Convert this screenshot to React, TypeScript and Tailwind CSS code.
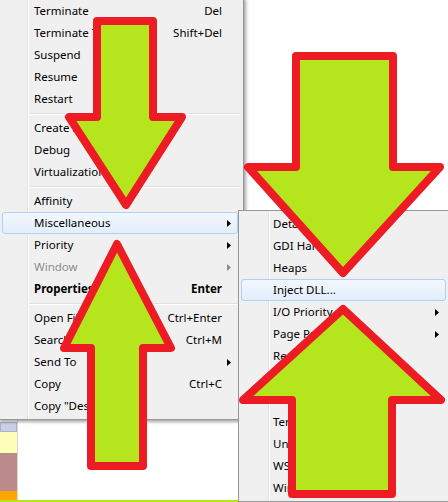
type Item =
  | { sep: true }
  | { sep?: false; label: string; key?: string; sub?: boolean; bold?: boolean; dim?: boolean; hot?: boolean };

const mainItems: Item[] = [
  { label: "Terminate", key: "Del" },
  { label: "Terminate Tree", key: "Shift+Del" },
  { label: "Suspend" },
  { label: "Resume" },
  { label: "Restart" },
  { sep: true },
  { label: "Create Dump File..." },
  { label: "Debug" },
  { label: "Virtualization" },
  { sep: true },
  { label: "Affinity" },
  { label: "Miscellaneous", sub: true, hot: true },
  { label: "Priority", sub: true },
  { label: "Window", sub: true, dim: true },
  { label: "Properties", key: "Enter", bold: true },
  { sep: true },
  { label: "Open File Location", key: "Ctrl+Enter" },
  { label: "Search Online", key: "Ctrl+M" },
  { label: "Send To", sub: true },
  { label: "Copy", key: "Ctrl+C" },
  { label: 'Copy "Description"' },
];

const subItems: Item[] = [
  { label: "Details" },
  { label: "GDI Handles" },
  { label: "Heaps" },
  { label: "Inject DLL...", hot: true },
  { label: "I/O Priority", sub: true },
  { label: "Page Priority", sub: true },
  { label: "Reduce Working Set" },
  { label: "Run As..." },
  { label: "Run As This User..." },
  { label: "Terminator" },
  { label: "Unloaded Modules" },
  { label: "WS Watch" },
  { label: "Windows" },
];

function SubArrow({ dim }: { dim?: boolean }) {
  return (
    <svg width="4" height="7" viewBox="0 0 4 7" className="absolute right-[6px] top-[7px]">
      <path d="M0 0 L4 3.5 L0 7 Z" fill={dim ? "#8d8d8d" : "#000"} />
    </svg>
  );
}

function Menu({ items, rowClass }: { items: Item[]; rowClass: string }) {
  return (
    <>
      {items.map((it, i) =>
        it.sep ? (
          <div key={i} className="h-[7px] flex flex-col justify-center ml-[31px] mr-[3px]">
            <div className="h-px bg-[#e0e0e0]" />
            <div className="h-px bg-white" />
          </div>
        ) : (
          <div
            key={i}
            className={`relative flex items-center h-[22px] rounded-[3px] border ${rowClass} ${
              it.hot
                ? "border-[#aecff7] bg-gradient-to-b from-[#f2f7fd] to-[#e2eefb]"
                : "border-transparent"
            }`}
          >
            <span
              className={`flex-1 whitespace-nowrap ${it.bold ? "font-bold" : ""} ${
                it.dim ? "text-[#8d8d8d]" : "text-black"
              }`}
            >
              {it.label}
            </span>
            {it.key && <span className={`whitespace-nowrap ${it.bold ? "font-bold" : ""}`}>{it.key}</span>}
            {it.sub && <SubArrow dim={it.dim} />}
          </div>
        )
      )}
    </>
  );
}

export default function App() {
  return (
    <div
      className="relative w-[448px] h-[502px] overflow-hidden bg-white text-[11.5px] leading-none"
      style={{ fontFamily: '"Noto Sans", "Liberation Sans", sans-serif' }}
    >
      {/* window behind */}
      <div className="flex h-full">
        <div className="w-[18px] flex flex-col border-r border-[#d8d8d8]">
          <div className="h-[422px]" />
          <div className="h-[10px] bg-[#c9d0e6] border border-[#a9b4d4]" />
          <div className="h-[21px] bg-[#ffffb9]" />
          <div className="h-[38px] bg-[#bb8b8b]" />
          <div className="h-[9px] bg-[#ffa500]" />
        </div>
        <div className="flex-1" />
      </div>
      <div className="absolute left-0 right-0 bottom-0 h-[2px] bg-[#b5e61d]" />

      {/* main context menu */}
      <div className="absolute left-[-2px] top-[-3px] w-[246px] bg-[#f0f0f0] border border-[#979797] pt-[2px] pb-[2px] shadow-[2px_2px_3px_rgba(0,0,0,0.35)]">
        <div className="absolute left-[28px] top-0 bottom-0 w-[2px] flex">
          <div className="w-px bg-[#e2e3e3]" />
          <div className="w-px bg-white" />
        </div>
        <Menu items={mainItems} rowClass="ml-[3px] mr-[5px] pl-[31px] pr-[15px]" />
      </div>

      {/* submenu */}
      <div className="absolute left-[238px] top-[210px] w-[212px] bg-[#f0f0f0] border border-[#979797] pt-[2px] pb-[2px]">
        <div className="absolute left-[29px] top-0 bottom-0 w-[2px] flex">
          <div className="w-px bg-[#e2e3e3]" />
          <div className="w-px bg-white" />
        </div>
        <Menu items={subItems} rowClass="ml-[2px] mr-[3px] pl-[31px] pr-[15px]" />
      </div>

      {/* big arrows drawn over the screenshot */}
      <svg className="absolute inset-0 pointer-events-none" width="448" height="502" viewBox="0 0 448 502">
        <g fill="#b5e61d" stroke="#ed1c24" strokeWidth="8" strokeLinejoin="round">
          <polygon points="97,21 153,21 153,117 182,117 126,205 69,117 97,117" />
          <polygon points="117,244 171,348 143,348 143,466 91,466 91,348 64,348" />
          <polygon points="296,56 393,56 393,167 440,167 343,273 248,167 296,167" />
          <polygon points="343,309 441,400 392,400 392,494 292,494 292,400 243,400" />
        </g>
      </svg>
    </div>
  );
}
